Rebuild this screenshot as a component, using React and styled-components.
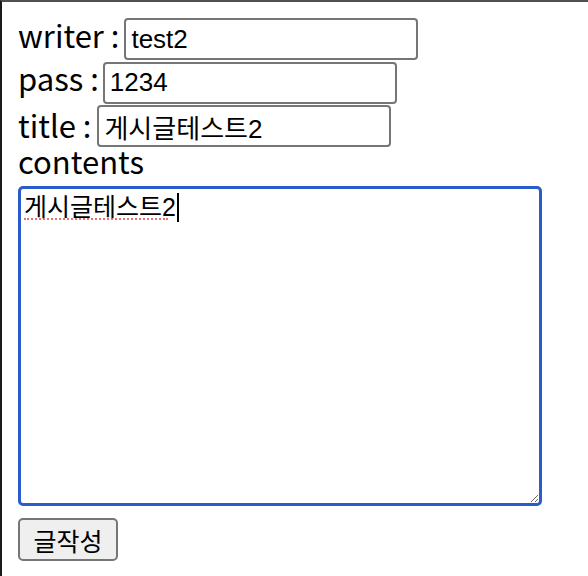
import React, { useState } from 'react';
import styled, { createGlobalStyle } from 'styled-components';

const GlobalStyle = createGlobalStyle`
  html, body {
    margin: 0;
    background: #fff;
  }
  body {
    min-height: 576px;
    box-sizing: border-box;
    border-top: 2px solid #4f4f4f;
    border-left: 2px solid #1c1a17;
    padding: 16px;
    font-family: "Noto Sans CJK KR", "Liberation Sans", sans-serif;
    color: #000;
  }
`;

const Form = styled.form`
  display: flex;
  flex-direction: column;
  align-items: flex-start;
  gap: 1.5px;
`;

const Row = styled.div`
  display: flex;
  align-items: baseline;
  gap: ${(p) => p.$gap || 5}px;
`;

const Label = styled.label`
  font-size: 31px;
  line-height: 32px;
  white-space: pre;
`;

const ContentsLabel = styled(Label)`
  line-height: 24px;
`;

const TextInput = styled.input`
  box-sizing: border-box;
  width: 294px;
  height: 42px;
  padding: 1px 5px;
  border: 2px solid #767676;
  border-radius: 4px;
  font-family: "Liberation Sans", "Noto Sans CJK KR", sans-serif;
  font-size: 26px;
  color: #000;
  background: #fff;
  outline: none;
`;

const AreaWrap = styled.div`
  position: relative;
  margin-top: 12px;
`;

const Area = styled.textarea`
  display: block;
  box-sizing: border-box;
  width: 524px;
  height: 320px;
  padding: 3px;
  border: 3px solid #2b5ccb;
  border-radius: 5px;
  font-family: "Liberation Sans", "Noto Sans CJK KR", sans-serif;
  font-size: 25px;
  line-height: 1.2;
  color: #000;
  outline: none;
`;

// spell-check dots and caret drawn over the textarea
const Squiggle = styled.span`
  position: absolute;
  left: 6px;
  top: 32px;
  width: 144px;
  border-bottom: 2px dotted #e57373;
  pointer-events: none;
`;

const Caret = styled.span`
  position: absolute;
  left: 159px;
  top: 7px;
  width: 1.5px;
  height: 29px;
  background: #000;
  pointer-events: none;
`;

const SubmitButton = styled.button`
  margin-top: 10.5px;
  box-sizing: border-box;
  width: 100px;
  height: 43px;
  padding: 0;
  border: 2px solid #767676;
  border-radius: 5px;
  background: #efefef;
  font-family: "Noto Sans CJK KR", sans-serif;
  font-size: 25px;
  color: #000;
`;

export default function App() {
  const [writer, setWriter] = useState('test2');
  const [pass, setPass] = useState('1234');
  const [title, setTitle] = useState('게시글테스트2');
  const [contents, setContents] = useState('게시글테스트2');

  return (
    <>
      <GlobalStyle />
      <Form onSubmit={(e) => e.preventDefault()}>
        <Row $gap={5}>
          <Label>writer :</Label>
          <TextInput value={writer} onChange={(e) => setWriter(e.target.value)} />
        </Row>
        <Row $gap={4}>
          <Label>pass :</Label>
          <TextInput value={pass} onChange={(e) => setPass(e.target.value)} />
        </Row>
        <Row $gap={6}>
          <Label>title :</Label>
          <TextInput value={title} onChange={(e) => setTitle(e.target.value)} />
        </Row>
        <ContentsLabel>contents</ContentsLabel>
        <AreaWrap>
          <Area
            spellCheck={false}
            value={contents}
            onChange={(e) => setContents(e.target.value)}
          />
          <Squiggle />
          <Caret />
        </AreaWrap>
        <SubmitButton type="submit">글작성</SubmitButton>
      </Form>
    </>
  );
}
